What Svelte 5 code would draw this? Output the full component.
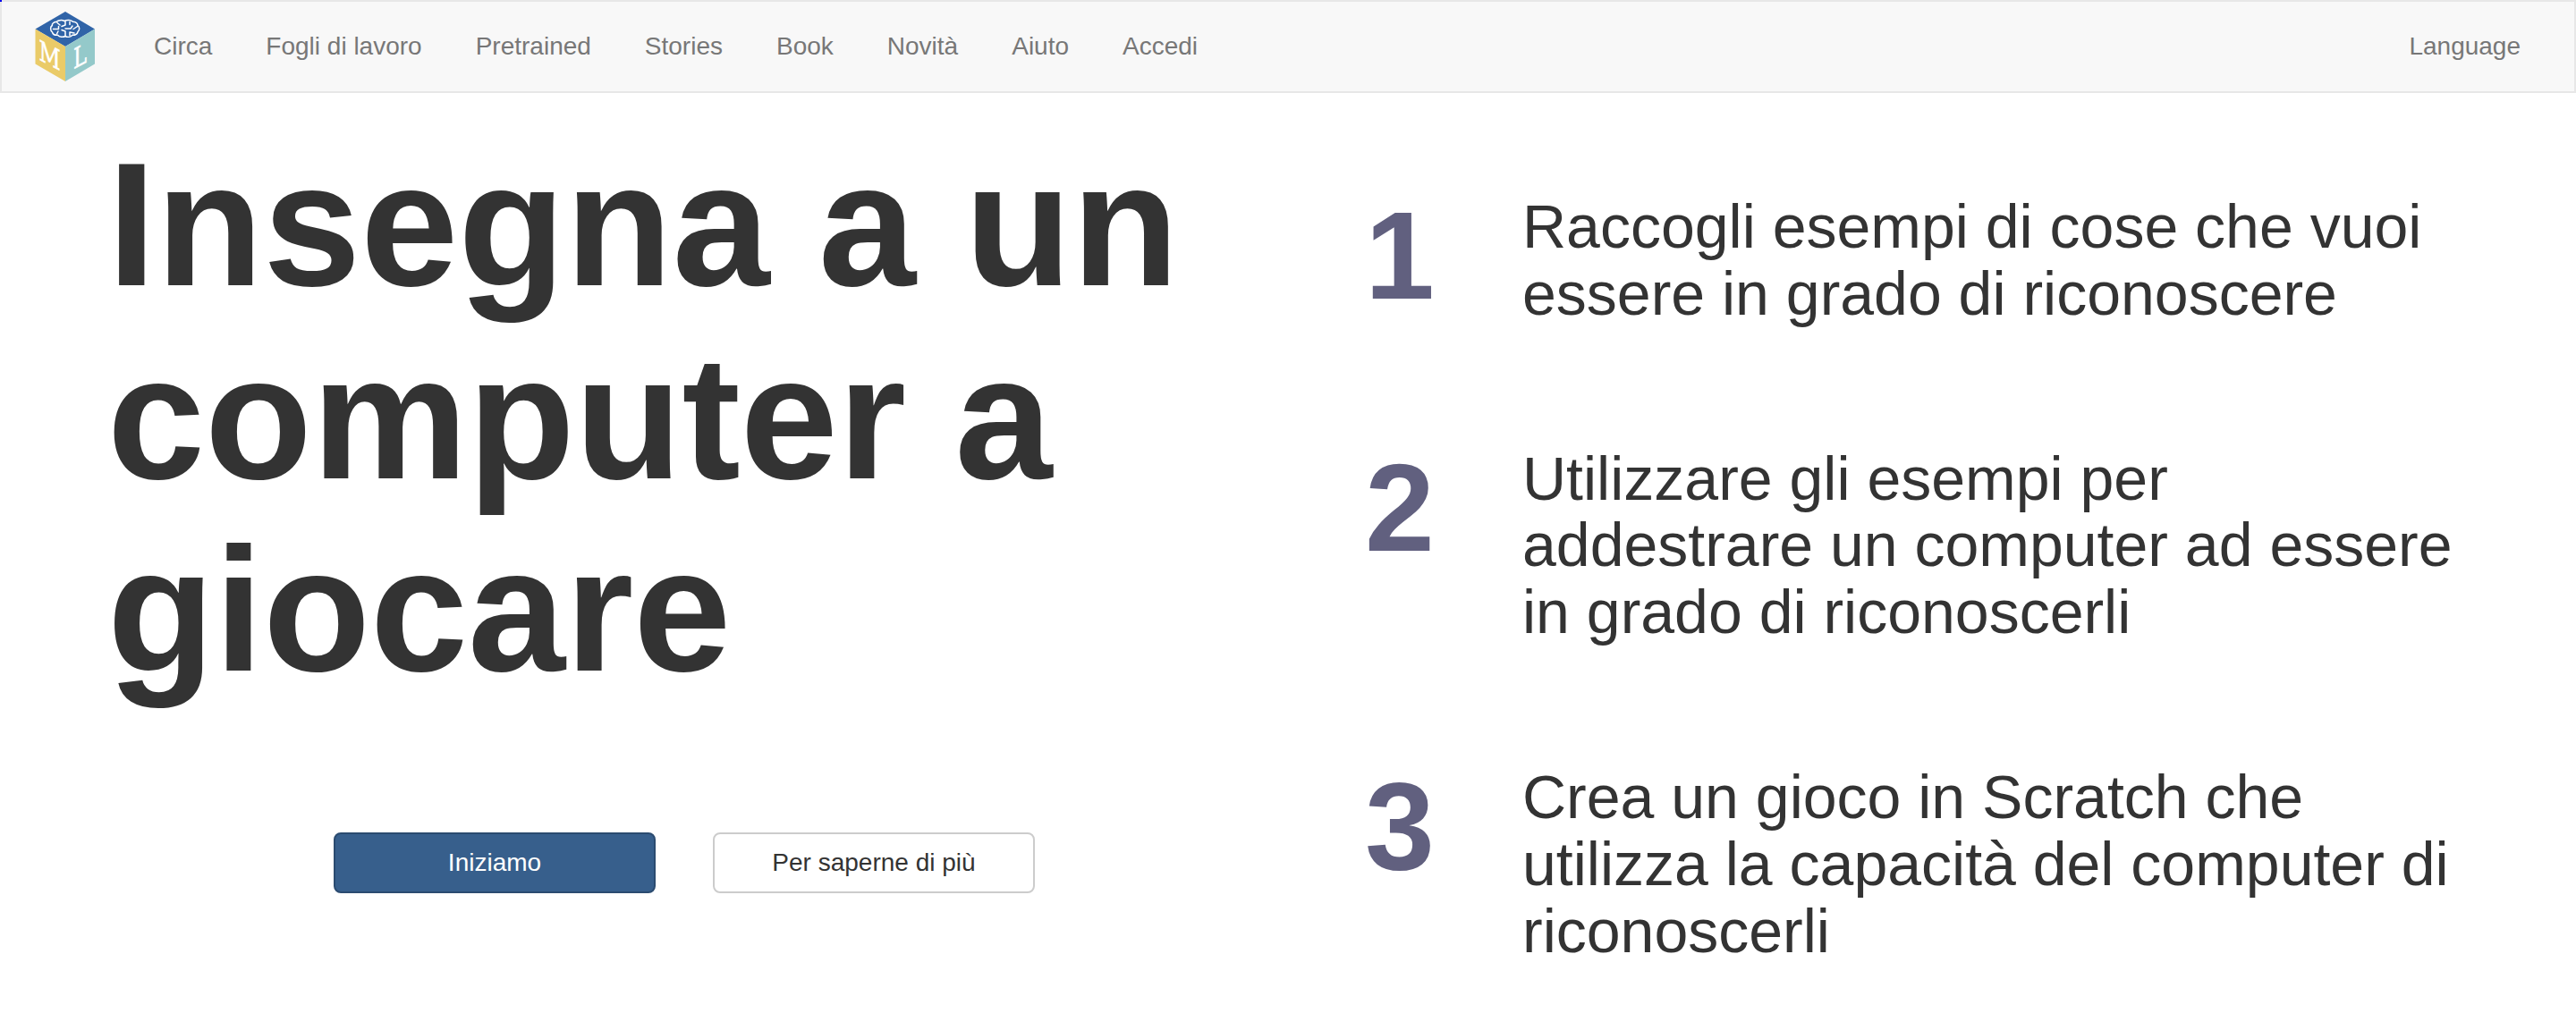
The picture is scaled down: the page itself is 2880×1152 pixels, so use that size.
<script>
  const links = ['Circa', 'Fogli di lavoro', 'Pretrained', 'Stories', 'Book', 'Novità', 'Aiuto', 'Accedi'];
  const steps = [
    'Raccogli esempi di cose che vuoi essere in grado di riconoscere',
    'Utilizzare gli esempi per addestrare un computer ad essere in grado di riconoscerli',
    'Crea un gioco in Scratch che utilizza la capacità del computer di riconoscerli',
  ];
</script>

<div class="page">
  <span class="corner"></span>
  <nav>
    <svg class="logo" viewBox="0 0 68 78" width="68" height="78" aria-label="ML">
      <path d="M34 0 67 19.5 34 39 0.5 19.5Z" fill="#3064a8" />
      <path d="M0.5 19.5 34 39V78L0.5 58.5Z" fill="#eacb68" />
      <path d="M67 19.5 34 39V78L67 58.5Z" fill="#94c9ca" />
      <g fill="none" stroke="#fff" stroke-width="1.5" stroke-linecap="round" stroke-linejoin="round">
        <path d="M33 10.5c-3-1.5-7-1-8.500.8-3.500.4-5.500 2-5.200 4.200-2.300 1.500-2.300 5.500.2 7.500.6 2.500 3.500 3.500 6 3.300 2 2.200 6 2.600 8.500 1.200 2.500 1.300 6 .9 8-1.200 3 0 5.500-1.300 6-3.800 2.300-1.800 2.200-5.200 0-7-.3-2.500-2.600-4-5.500-4.200-2-2-6.500-2.500-9.500-.8Z" />
        <path d="M34 11v4l-4 1.500M34 27.500V22l-4-1.500M34 19h6l2-3M25 12.500l3 2.500M20.500 19.500h6v-3M24.500 25l1.500-3M39 11.500v3M47.500 16.500 43 19.500M39 26.500V23l5 1" />
      </g>
      <text class="letter" transform="matrix(.76 .4 0 1 4.500 53.500)">M</text>
      <text class="letter" transform="matrix(.73 -.39 0 1 43 64.500)">L</text>
    </svg>
    <ul>
      {#each links as link}<li><a href="#top">{link}</a></li>{/each}
    </ul>
    <a class="language" href="#top">Language</a>
  </nav>
  <main>
    <section class="intro">
      <h1>Insegna a un computer a giocare</h1>
      <div class="actions">
        <button class="primary">Iniziamo</button>
        <button>Per saperne di più</button>
      </div>
    </section>
    <section class="steps">
      {#each steps as step, i}
        <div class="step"><b>{i + 1}</b><p>{step}</p></div>
      {/each}
    </section>
  </main>
</div>

<style>
  :global(body) { background: #fff; overflow: hidden; }
  .page {
    position: relative; box-sizing: border-box; width: 2880px; height: 1152px; overflow: hidden;
    font-family: "Liberation Sans", Arial, sans-serif; font-size: 28px; line-height: 40px; color: #333;
  }
  .corner { position: absolute; left: 0; top: 0; width: 2px; height: 2px; background: #0000ee; }
  nav {
    box-sizing: border-box; height: 104px; border: 2px solid #e7e7e7; background: #f8f8f8;
    display: flex; align-items: center; padding: 0 60px 0 36px;
  }
  .logo { display: block; flex: none; margin-left: 1px; }
  .letter { font-family: "DejaVu Serif", serif; font-size: 31px; fill: #fff; stroke: #fff; stroke-width: 0.6px; }
  ul { display: flex; list-style: none; margin: 0 0 0 65px; padding: 0; gap: 60px; flex: 1; }
  a { color: #777; text-decoration: none; white-space: nowrap; }
  main { display: grid; grid-template-columns: 1290px 1fr; padding-left: 120px; column-gap: 116px; }
  h1 { margin: 40px 0 0; font-size: 196px; line-height: 215.6px; font-weight: bold; }
  .actions { display: flex; gap: 64px; margin: 140px 0 0 253px; }
  button {
    box-sizing: border-box; width: 360px; height: 68px; padding: 0; border: 2px solid #ccc; border-radius: 8px;
    background: #fff; color: #333; font: 28px/40px "Liberation Sans", Arial, sans-serif;
  }
  .primary { background: #375f8c; border-color: #2b4b70; color: #fff; }
  .steps { padding-top: 112px; }
  .step { display: flex; align-items: flex-start; margin-bottom: 132px; }
  b { width: 176px; flex: none; font-size: 140px; line-height: 139px; color: #61607f; }
  p { margin: 0; width: 1060px; font-size: 68px; line-height: 74.8px; }
</style>
